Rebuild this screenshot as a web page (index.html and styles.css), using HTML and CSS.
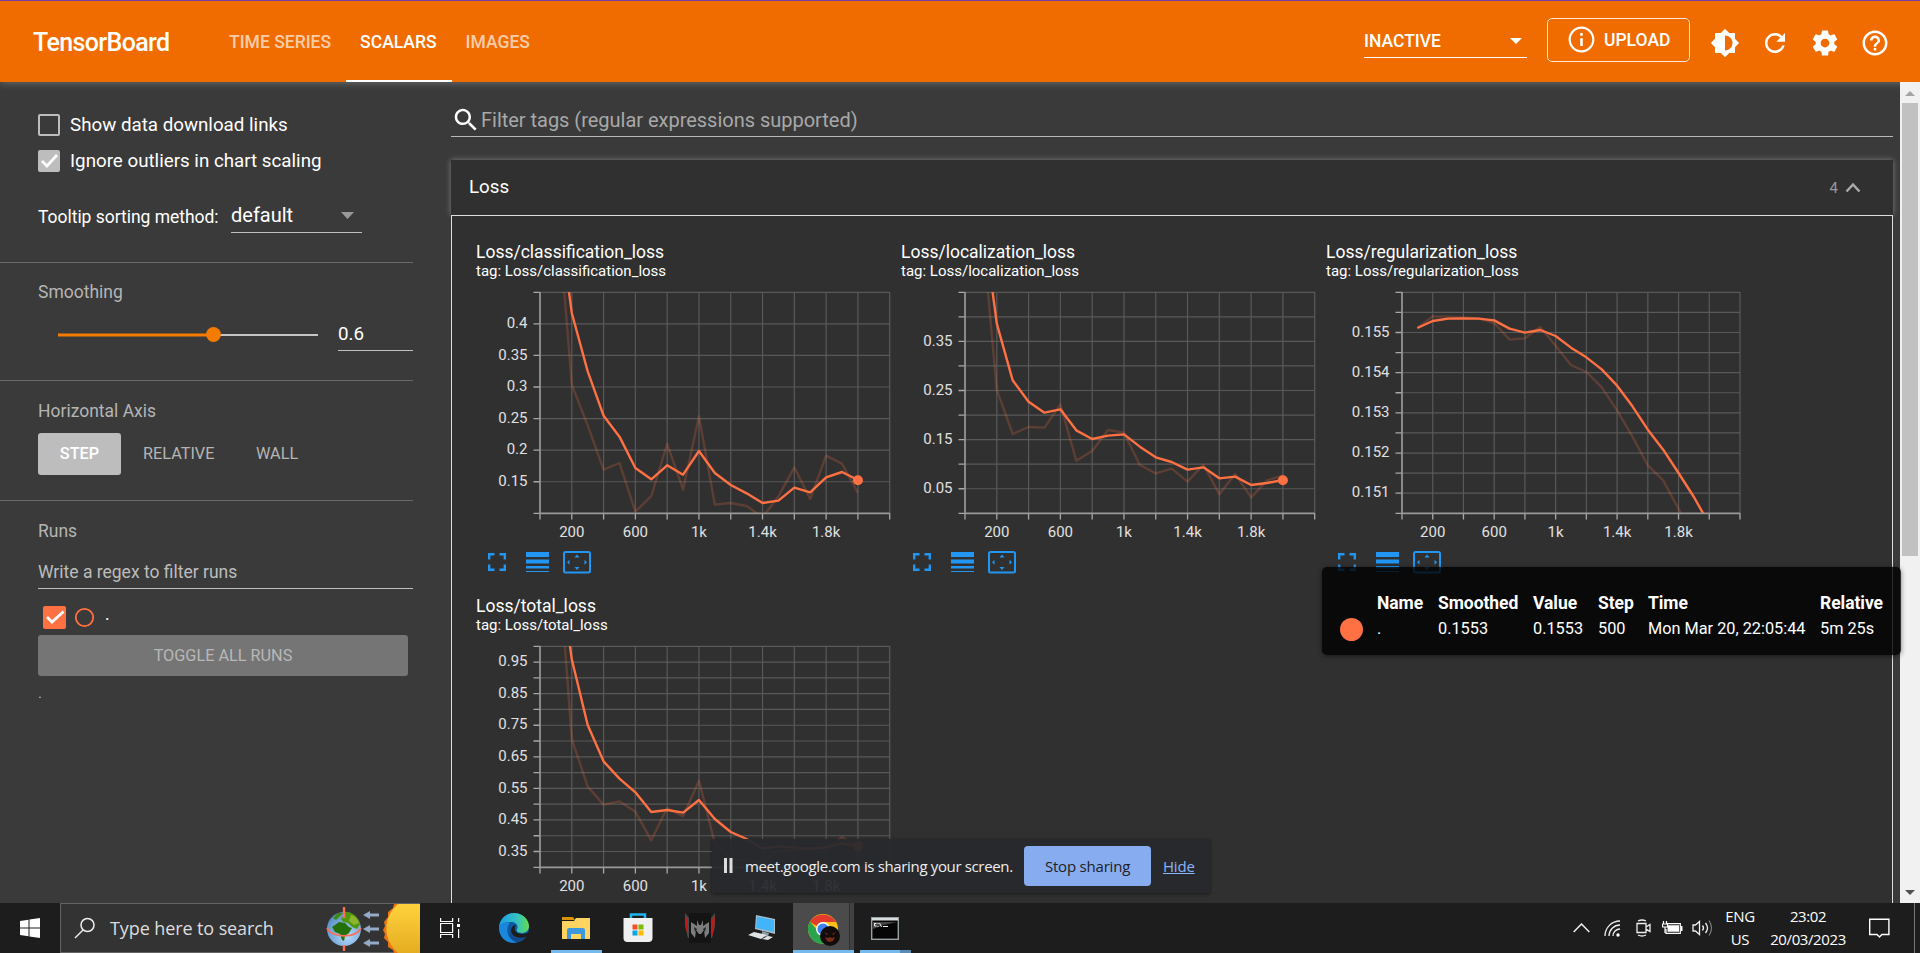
FILE: index.html
```html
<!DOCTYPE html>
<html lang="en">
<head>
<meta charset="utf-8">
<title>TensorBoard</title>
<link rel="stylesheet" href="styles.css">
</head>
<body>
<header class="topbar">
  <div class="brand">TensorBoard</div>
  <nav class="tabs">
    <a class="tab">TIME SERIES</a>
    <a class="tab active">SCALARS</a>
    <a class="tab">IMAGES</a>
  </nav>
  <div class="inactive"><span>INACTIVE</span><svg width="12" height="6" viewBox="0 0 12 6"><path d="M0 0h12L6 6z" fill="#fff"/></svg></div>
  <div class="upload"><svg width="31" height="31" viewBox="0 0 24 24"><path fill="#fff" d="M11 7h2v2h-2zm0 4h2v6h-2zm1-9C6.480 2 2 6.480 2 12s4.480 10 10 10 10-4.480 10-10S17.520 2 12 2zm0 18.300c-4.580 0-8.300-3.720-8.300-8.300S7.420 3.700 12 3.700s8.300 3.720 8.300 8.300-3.720 8.300-8.300 8.300z"/></svg><span>UPLOAD</span></div>
  <div class="actions">
    <svg viewBox="0 0 24 24"><path fill="#fff" d="M20 15.310 23.310 12 20 8.690V4h-4.690L12 .690 8.690 4H4v4.690L.690 12 4 15.310V20h4.690L12 23.310 15.310 20H20v-4.690zM12 18V6c3.310 0 6 2.690 6 6s-2.690 6-6 6z"/></svg>
    <svg viewBox="0 0 24 24"><path fill="#fff" d="M17.650 6.350C16.200 4.900 14.210 4 12 4c-4.420 0-7.990 3.580-7.990 8s3.570 8 7.990 8c3.730 0 6.840-2.550 7.730-6h-2.080c-.820 2.330-3.040 4-5.650 4-3.310 0-6-2.690-6-6s2.690-6 6-6c1.660 0 3.140.690 4.220 1.780L13 11h7V4l-2.350 2.350z"/></svg>
    <svg viewBox="0 0 24 24"><path fill="#fff" d="M19.430 12.980c.040-.320.070-.640.070-.980s-.030-.660-.070-.980l2.110-1.650c.190-.150.240-.420.120-.640l-2-3.460c-.120-.220-.390-.300-.610-.220l-2.490 1c-.520-.400-1.080-.730-1.690-.980l-.380-2.650C14.460 2.180 14.250 2 14 2h-4c-.250 0-.460.180-.490.420l-.380 2.650c-.610.250-1.170.590-1.690.980l-2.490-1c-.230-.090-.490 0-.610.220l-2 3.460c-.130.220-.070.490.120.640l2.110 1.650c-.040.320-.070.650-.070.980s.030.660.070.980l-2.110 1.650c-.190.150-.240.420-.120.640l2 3.460c.120.220.390.300.610.220l2.490-1c.520.400 1.080.730 1.690.980l.380 2.650c.030.240.240.420.490.420h4c.250 0 .460-.180.490-.420l.380-2.650c.610-.250 1.170-.590 1.690-.980l2.490 1c.230.090.490 0 .610-.220l2-3.460c.120-.220.070-.490-.120-.640l-2.110-1.650zM12 15.500c-1.930 0-3.500-1.570-3.500-3.500s1.570-3.500 3.500-3.500 3.500 1.570 3.500 3.500-1.570 3.500-3.500 3.500z"/></svg>
    <svg viewBox="0 0 24 24"><path fill="#fff" d="M11 18h2v-2h-2v2zm1-16C6.480 2 2 6.480 2 12s4.480 10 10 10 10-4.480 10-10S17.520 2 12 2zm0 18c-4.410 0-8-3.590-8-8s3.590-8 8-8 8 3.590 8 8-3.590 8-8 8zm0-14c-2.210 0-4 1.790-4 4h2c0-1.100.900-2 2-2s2 .900 2 2c0 2-3 1.750-3 5h2c0-2.250 3-2.500 3-5 0-2.210-1.790-4-4-4z"/></svg>
  </div>
</header>

<div class="workspace">
  <aside class="sidebar">
    <section class="options">
      <label class="check-row"><span class="box"></span><span class="t-show">Show data download links</span></label>
      <label class="check-row"><span class="box on"><svg width="22" height="22" viewBox="0 0 22 22"><path d="M4 11l5 5L19 5" fill="none" stroke="#fff" stroke-width="2.800"/></svg></span><span class="t-ignore">Ignore outliers in chart scaling</span></label>
      <div class="sorting"><span class="t-sort">Tooltip sorting method:</span><div class="select"><span>default</span><svg width="13" height="7" viewBox="0 0 13 7"><path d="M0 0h13L6.500 7z" fill="#999"/></svg></div></div>
    </section>
    <section class="smoothing">
      <h3>Smoothing</h3>
      <div class="slider-row">
        <svg class="slider" width="280" height="20" viewBox="0 0 280 20"><path d="M20 10H280" stroke="#c4c4c4" stroke-width="2"/><path d="M20 10H175" stroke="#f57c00" stroke-width="3"/><circle cx="175.500" cy="9.500" r="7.400" fill="#f57c00"/></svg>
        <div class="value">0.6</div>
      </div>
    </section>
    <section class="axis">
      <h3>Horizontal Axis</h3>
      <div class="modes"><button class="mode on">STEP</button><button class="mode rel">RELATIVE</button><button class="mode wall">WALL</button></div>
    </section>
    <section class="runs">
      <h3>Runs</h3>
      <div class="regex">Write a regex to filter runs</div>
      <div class="run"><svg width="44" height="24" viewBox="0 0 44 24"><rect width="23" height="23" rx="2" fill="#ff7043"/><path d="M4 11l5 5L20.500 5.500" fill="none" stroke="#fff" stroke-width="2.800"/><circle cx="41.500" cy="11.500" r="8.700" fill="none" stroke="#ff7043" stroke-width="1.800"/></svg><span>.</span></div>
      <button class="toggle">TOGGLE ALL RUNS</button>
      <div class="logdir">.</div>
    </section>
  </aside>

  <main class="main">
    <div class="filter"><svg width="30" height="30" viewBox="0 0 24 24"><path fill="#fff" d="M15.500 14h-.790l-.280-.270C15.410 12.590 16 11.110 16 9.500 16 5.910 13.090 3 9.500 3S3 5.910 3 9.500 5.910 16 9.500 16c1.610 0 3.090-.590 4.230-1.570l.270.280v.790l5 4.990L20.490 19l-4.990-5zm-6 0C7.010 14 5 11.990 5 9.500S7.010 5 9.500 5 14 7.010 14 9.500 11.990 14 9.500 14z"/></svg><span>Filter tags (regular expressions supported)</span></div>
    <div class="panel">
      <div class="panel-head"><span class="panel-title">Loss</span><span class="count">4</span><svg width="16" height="11" viewBox="0 0 16 11"><path d="M1.500 9.500 8 2.500l6.500 7" fill="none" stroke="#aaa" stroke-width="2.500"/></svg></div>
      <div class="cards" id="cards"></div>
    </div>
  </main>
  <div class="scrollbar"><i class="up"></i><i class="thumb"></i><i class="down"></i></div>
</div>

<div class="tooltip">
  <table>
    <tr><th class="c0"></th><th class="c1">Name</th><th class="c2">Smoothed</th><th class="c3">Value</th><th class="c4">Step</th><th class="c5">Time</th><th>Relative</th></tr>
    <tr><td><i class="swatch"></i></td><td>.</td><td>0.1553</td><td>0.1553</td><td>500</td><td>Mon Mar 20, 22:05:44</td><td>5m 25s</td></tr>
  </table>
</div>

<div class="sharebar">
  <svg width="9" height="15" viewBox="0 0 9 15"><path d="M0 0h3v15H0zM5.500 0h3v15h-3z" fill="#ddd"/></svg>
  <span class="share-text">meet.google.com is sharing your screen.</span>
  <button class="stop">Stop sharing</button>
  <a class="hide">Hide</a>
</div>

<footer class="taskbar">
  <div class="start"><svg width="20" height="20" viewBox="0 0 20 20"><path fill="#fff" d="M0 3l8.500-1.200v7.700H0zM9.500 1.600 20 0v9.500H9.500zM0 10.500h8.500v7.700L0 17zM9.500 10.500H20V20L9.500 18.500z"/></svg></div>
  <div class="search">
    <svg width="22" height="22" viewBox="0 0 22 22"><g fill="none" stroke="#eee" stroke-width="1.500"><circle cx="13.500" cy="8" r="6.500"/><path d="M9 13 1 21"/></g></svg>
    <span>Type here to search</span>
    <svg class="art" width="95" height="49" viewBox="0 0 95 49">
      <defs>
        <radialGradient id="sea" cx=".6" cy=".7" r=".7"><stop offset="0" stop-color="#b5dcff"/><stop offset="1" stop-color="#5a8fc4"/></radialGradient>
        <linearGradient id="sun" x1="0" y1="0" x2="0" y2="1"><stop offset="0" stop-color="#ffd23c"/><stop offset="1" stop-color="#e5ad22"/></linearGradient>
      </defs>
      <circle cx="19" cy="25" r="17" fill="url(#sea)"/>
      <path d="M18 8c8-1 15 4 17 12l-3 5-5-2-4-4-5-1-2-3 3-4z" fill="#4f970f"/>
      <path d="M7 23l7-5 6 1 4 4 3 1-3 5-4 3-1 5-2-1-2-6-5-2z" fill="#26700c"/>
      <path d="M8 14l5-5 5 0-4 4-3 3z" fill="#398b0e"/>
      <path d="M26 11c4 1 7 4 8 8l-5 2-5-4z" fill="#8cb52d"/>
      <path d="M2 24c5 10 28 11 34 0" fill="none" stroke="#f4715c" stroke-width="1.800"/>
      <path d="M19 3v11M19 41v6" stroke="#ff6f50" stroke-width="2.400"/>
      <path d="M38 11l7-4v2.500h9v3h-9V15zM38 25l7-4v2.500h9v3h-9V29zM38 39l7-4v2.500h9v3h-9V43z" fill="#94aac8"/>
      <path d="M95 0H69l-1 4-5 4v5l-4 5 1 4-2 4 2 4-1 4 4 4v5l5 3 1 3h26z" fill="#ed7413"/>
      <path d="M95 0H73C57 14 58 36 73 49h22z" fill="url(#sun)"/>
    </svg>
  </div>
  <div class="task view"><svg width="21" height="20" viewBox="0 0 21 20"><g fill="none" stroke="#fff" stroke-width="1.200"><path d="M.600 0v3.500h12V0M.600 5.500h12v9H.600zM.600 20v-3.500h12V20M18.600 0v4M18.600 11v9"/></g><path d="M17 6h3v3h-3z" fill="#fff"/></svg></div>
  <div class="task"><svg width="30" height="30" viewBox="0 0 30 30"><defs><linearGradient id="eg" x1="0" x2="1"><stop offset="0" stop-color="#1b9de2"/><stop offset=".6" stop-color="#35c1c4"/><stop offset="1" stop-color="#63dc4a"/></linearGradient></defs><circle cx="15" cy="15" r="15" fill="#0c59a4"/><path d="M0 14C1 5 8 0 15 0c9 0 15 7 15 13 0 5-4 7-7 7-5 0-6-2-5-4 2-4-2-7-6-7-6 0-10 2-12 5z" fill="url(#eg)"/><path d="M0 14c2-4 7-6 11-4-4 3-5 17 8 19C8 32 0 25 0 14z" fill="#1b87dc"/><path d="M17 12c-3 3-1 9 6 9 3 0 5-1 7-2l-1 4c-8 4-17 1-17-5 0-3 2-6 5-6z" fill="#1d1d1d"/><path d="M12 17c0 6 8 10 15 7-3 4-7 5-9 5-6-1-9-7-6-12z" fill="#124a8b"/></svg></div>
  <div class="task open"><svg width="28" height="24" viewBox="0 0 28 24"><path d="M0 1h11l2 3H0z" fill="#d99306"/><path d="M0 5h12l2-3h14v21H0z" fill="#ffd461"/><path d="M5 23v-9q0-2 2-2h14q2 0 2 2v9h-4v-5H9v5z" fill="#3d98de"/></svg></div>
  <div class="task"><svg width="30" height="30" viewBox="0 0 30 30"><path d="M8 7V1.500h14V7" fill="none" stroke="#21b4f2" stroke-width="2.500"/><path d="M.500 5h29v20q0 4-4 4h-21q-4 0-4-4z" fill="#f0f0f0"/><path d="M9.500 11.500h5v5h-5z" fill="#f25022"/><path d="M15.500 11.500h5v5h-5z" fill="#7fba00"/><path d="M9.500 17.500h5v5h-5z" fill="#00a4ef"/><path d="M15.500 17.500h5v5h-5z" fill="#ffb900"/></svg></div>
  <div class="task"><svg width="30" height="30" viewBox="0 0 30 30"><path d="M4 0h22v30H4z" fill="#141414"/><path d="M0 0l4 5v20h-1L0 13zM30 0l-4 5v20h1l3-12z" fill="#4b4b4b"/><path d="M0 3l3 4v17l-2-8zM30 3l-3 4v17l2-8z" fill="#c01818"/><path d="M12 7l2 5h2l2-5v6l6-4v11l-4 5-1-8-3 4h-2l-3-4-1 8-4-5V9l6 4z" fill="#7d7d7d"/><path d="M9 14l3 2-2 3zM21 14l-3 2 2 3z" fill="#222"/></svg></div>
  <div class="task"><svg width="28" height="26" viewBox="0 0 28 26"><path d="M8 0l19 4v15L7 14z" fill="#aebdca"/><path d="M9 1.500 26 5v12L8 13z" fill="#42b4fb"/><path d="M14 16l7 2-1 4-6-1z" fill="#8d98a0"/><path d="M0 20l6-3 13 3-6 4zM14 24l6-3 5 1-5 3z" fill="#dfe3e6"/></svg></div>
  <div class="task focused"><svg width="32" height="32" viewBox="0 0 32 32"><circle cx="15" cy="15" r="15" fill="#fbc116"/><path d="M2 8A15 15 0 0 1 28 8H15a7 7 0 0 0-6 4z" fill="#e33b2e"/><path d="M2 7.500A15 15 0 0 0 15 30l5-9q-8 1-11-5z" fill="#2ba24c"/><circle cx="15" cy="15" r="7" fill="#fff"/><circle cx="15" cy="15" r="5.600" fill="#3c82f1"/><circle cx="22" cy="22" r="10" fill="#120d0c"/><path d="M16 18l4 2-1 1zM28 18l-4 2 1 1zM17 23l3 1 2-1 2 1 3-1-2 4-3 1-3-1z" fill="#7b2d16"/></svg></div>
  <div class="task term"><svg width="28" height="23" viewBox="0 0 28 23"><rect x=".7" y=".7" width="26.600" height="21.600" fill="#060606" stroke="#99a1a5" stroke-width="1.400"/><path d="M1 1h26v2.500H1z" fill="#d7dcde"/><path d="M2 12Q14 7 26 5H2z" fill="#444"/><path d="M3.500 6.500h2M3.500 6v3M3.500 9h2M7 6v1M7 9v1M8.500 6l2 4M12 9.500h5" stroke="#eee" fill="none"/></svg></div>
  <div class="tray">
    <svg width="17" height="10" viewBox="0 0 17 10"><path d="M.700 9 8.500 1l7.800 8" fill="none" stroke="#eee" stroke-width="1.500"/></svg>
    <svg class="wifi" width="17" height="17" viewBox="0 0 17 17"><g fill="none" stroke="#eee" stroke-width="1.300"><path d="M1 16A15 15 0 0 1 16 1M5 16A11 11 0 0 1 16 5M9 16a7 7 0 0 1 7-7" /></g><circle cx="14" cy="15" r="1.700" fill="#fff"/></svg>
    <svg class="cam" width="15" height="18" viewBox="0 0 15 18"><g fill="none" stroke="#eee" stroke-width="1.300"><path d="M1 4.500h9v9H1zM10 8l4-2.500v7L10 10M2 2q4-2 8 0M2 16q4 2 8 0"/></g></svg>
    <svg class="bat" width="21" height="14" viewBox="0 0 21 14"><path d="M5 2.700h13.300v9.600H4V8" fill="none" stroke="#fff" stroke-width="1.200"/><path d="M5.500 4.300H17v6.500H5.500zM19 5h1.500v5H19z" fill="#fff"/><path d="M1.500 0v3M4.500 0v3M.500 3h5v3h-5zM3 6v6" fill="none" stroke="#fff" stroke-width="1.200"/></svg>
    <svg class="snd" width="22" height="18" viewBox="0 0 22 18"><g fill="none" stroke="#eee" stroke-width="1.300"><path d="M1 6h2.500L7.500 2.500v13L3.500 12H1zM10.500 6.500q2 2.500 0 5M13.500 4q4 5 0 10"/><path d="M17 1.500q5 7.500 0 15" stroke="#777"/></g></svg>
    <div class="lang"><div>ENG</div><div>US</div></div>
    <div class="clock"><div>23:02</div><div>20/03/2023</div></div>
    <svg class="note" width="21" height="21" viewBox="0 0 21 21"><path d="M.700 1.200h19.200v15.300h-7L10.500 19 8 16.500H.700z" fill="none" stroke="#fff" stroke-width="1.400"/></svg>
    <i class="desk"></i>
  </div>
</footer>
<script src="charts.js"></script>
</body>
</html>
```
FILE: styles.css
```css
* { box-sizing: border-box; }
body { margin: 0; width: 1920px; height: 953px; overflow: hidden; background: #3a3a3a; color: #fff; font-family: Roboto, "Liberation Sans", sans-serif; display: flex; flex-direction: column; }
button { font-family: inherit; border: 0; padding: 0; }
svg { display: block; flex: none; }
span, h3, a, .tab { white-space: nowrap; }

.topbar { height: 82px; flex: none; background: #f06c00; border-top: 1px solid #7440a8; display: flex; align-items: center; padding-left: 33px; position: relative; z-index: 1; box-shadow: 0 1px 8px rgba(255,255,255,.26); }
.brand { width: 182px; font-size: 25px; font-weight: 500; letter-spacing: -.625px; padding-top: 2px; }
.tabs { display: flex; height: 81px; }
.tab { padding: 2px 15px 0 14px; font-size: 17.5px; font-weight: 500; line-height: 78px; height: 81px; border-bottom: 2px solid transparent; color: rgba(255,255,255,.68); }
.tab.active { color: #fff; border-color: #fff; }
.inactive { margin-left: auto; width: 163px; height: 34px; margin-bottom: 1px; border-bottom: 1px solid #fff; display: flex; justify-content: space-between; align-items: center; padding: 1px 5px 0 0; font-size: 17.5px; font-weight: 500; }
.upload { margin: 0 20px 4px; width: 143px; height: 44px; border: 1px solid rgba(255,255,255,.85); border-radius: 5px; display: flex; align-items: center; padding-left: 18px; gap: 7px; font-size: 17.5px; font-weight: 500; }
.actions { display: flex; gap: 20px; width: 210px; padding-top: 3px; }
.actions svg { width: 30px; height: 30px; }

.workspace { flex: none; height: 821px; display: flex; overflow: hidden; }
.sidebar { width: 413px; flex: none; color: #fff; }
.sidebar section { padding-left: 38px; border-bottom: 1px solid #686868; }
.sidebar section.runs { border: 0; }
.sidebar h3 { margin: 0; font-size: 17.5px; font-weight: 400; line-height: 24px; color: #b5b5b5; }
.options { height: 181px; padding-top: 25px; font-size: 18.750px; }
.check-row { display: flex; align-items: center; height: 36px; gap: 10px; }
.box { width: 22px; height: 22px; border: 2px solid #bdbdbd; border-radius: 2px; }
.box.on { border: 0; background: #bdbdbd; }
.sorting { display: flex; margin-top: 26px; height: 28px; }
.t-sort { width: 193px; font-size: 17.5px; line-height: 24px; letter-spacing: -.03px; }
.select { width: 131px; height: 29px; margin-top: -1px; border-bottom: 1px solid #c0c0c0; display: flex; align-items: center; justify-content: space-between; font-size: 20px; padding: 0 8px 6px 0; }
.smoothing { height: 118px; padding-top: 17px; }
.slider-row { display: flex; margin-top: 17px; }
.slider { margin-top: 4px; }
.value { margin-left: 20px; width: 75px; height: 30px; line-height: 26px; border-bottom: 1px solid #c0c0c0; font-size: 18.750px; }
.axis { height: 120px; padding-top: 18px; }
.modes { display: flex; margin-top: 10px; }
.mode { height: 42px; border-radius: 3px; background: none; color: #b5b5b5; font-size: 16.250px; text-align: left; width: 113px; padding: 0 0 2px 22px; }
.mode.on { width: 83px; padding: 0 0 2px; text-align: center; background: #bdbdbd; color: #fff; font-weight: 500; }
.runs { padding-top: 18px; }
.regex { width: 375px; height: 46px; border-bottom: 1px solid #c0c0c0; padding-top: 10px; line-height: 38px; font-size: 17.5px; color: #bdbdbd; }
.run { margin: 17px 0 0 5px; height: 29px; display: flex; gap: 18px; }
.run svg { overflow: visible; }
.run span { font-size: 17.5px; line-height: 17px; }
.toggle { display: block; width: 370px; height: 41px; background: #757575; border-radius: 3px; color: #b8b8b8; font-size: 16.250px; }
.logdir { color: #b5b5b5; font-size: 15px; line-height: 17px; margin-top: 9px; }

.main { width: 1442px; margin-left: 38px; padding-top: 22px; }
.filter { height: 33px; border-bottom: 1px solid #b8b8b8; display: flex; align-items: center; font-size: 20px; letter-spacing: -.02px; color: #a8a8a8; }
.panel { margin-top: 23px; }
.panel-head { height: 55px; background: #303030; box-shadow: 0 0 6px rgba(255,255,255,.35); display: flex; align-items: center; padding: 0 32px 0 18px; }
.panel-title { font-size: 18.750px; margin-right: auto; padding-bottom: 2px; }
.count { font-size: 15px; color: #999; margin-right: 7px; }
.cards { height: 740px; background: #303030; border: 1px solid #ddd; display: grid; grid-template-columns: repeat(3, 425px); grid-auto-rows: 354px; padding: 26px 0 0 24px; position: relative; }
.card-title { font-size: 17.5px; line-height: 21px; white-space: nowrap; }
.card-tag { font-size: 15px; line-height: 17px; white-space: nowrap; }
.plot { margin-top: 5px; font-size: 15px; }
.plot text { fill: #e0e0e0; }
.tools { display: flex; align-items: center; padding-left: 12px; height: 24px; margin-top: 7px; }
.tools .bars { margin: 0 14px 0 20px; }

.scrollbar { width: 20px; margin-left: 7px; background: #f1f1f1; display: flex; flex-direction: column; align-items: center; }
.scrollbar .up { margin-top: 9px; border: 5px solid transparent; border-top: 0; border-bottom-color: #a3a3a3; }
.scrollbar .thumb { margin-top: 7px; width: 16px; height: 453px; background: #c1c1c1; }
.scrollbar .down { margin: auto 0 8px; border: 5px solid transparent; border-bottom: 0; border-top-color: #505050; }

.tooltip { position: absolute; z-index: 3; left: 1322px; top: 567px; width: 579px; height: 88px; border-radius: 5px; background: rgba(0,0,0,.8); box-shadow: 0 1px 5px rgba(0,0,0,.5); padding: 23px 0 0 18px; }
.tooltip table { border-collapse: collapse; table-layout: fixed; width: 561px; }
.tooltip th, .tooltip td { padding: 0; text-align: left; height: 26px; line-height: 26px; white-space: nowrap; }
.tooltip th { font-weight: 700; font-size: 17.5px; letter-spacing: -.05px; }
.tooltip td { font-size: 16.300px; }
.c0 { width: 37px; } .c1 { width: 61px; } .c2 { width: 95px; } .c3 { width: 65px; } .c4 { width: 50px; } .c5 { width: 172px; }
.swatch { display: block; width: 23px; height: 23px; border-radius: 50%; background: #ff7043; }

.sharebar { position: absolute; z-index: 4; left: 712px; top: 839px; width: 498px; height: 54px; background: rgba(40,41,45,.95); box-shadow: 0 1px 3px rgba(0,0,0,.5); display: flex; align-items: center; padding: 0 0 1px 12px; font-family: "Open Sans", "Noto Sans", sans-serif; font-size: 15px; }
.share-text { margin-left: 12px; width: 279px; color: #eee; letter-spacing: -.35px; }
.stop { width: 127px; height: 40px; border-radius: 4px; background: #87adf0; color: #202124; font-size: 15px; letter-spacing: -.2px; }
.hide { margin-left: 12px; color: #8ab4f8; text-decoration: underline; letter-spacing: -.2px; }

.taskbar { height: 50px; flex: none; background: #1d1d1d; display: flex; align-items: center; position: relative; z-index: 2; font-family: "Open Sans", "Noto Sans", sans-serif; }
.start { width: 60px; padding-left: 20px; }
.search { width: 360px; height: 50px; background: #333; border: 1px solid #646464; display: flex; align-items: center; padding-left: 13px; font-size: 18px; color: #ddd; }
.search span { margin-left: 14px; letter-spacing: -.1px; }
.search .art { margin: 0 -1px 0 auto; }
.task { width: 62px; height: 50px; display: flex; align-items: center; justify-content: center; }
.task.view { width: 63px; padding-right: 3px; }
.task.open { background: linear-gradient(#76b9ed, #76b9ed) 6px 47px / 51px 3px no-repeat; }
.task.focused { width: 61px; background: linear-gradient(#76b9ed, #76b9ed) 0 47px / 61px 3px no-repeat, linear-gradient(90deg, #4b4b4b 56px, #303030 56px, #303030 57px, #414141 57px); padding: 3px 0 0 0; }
.task.term { background: linear-gradient(90deg, #76b9ed 40px, #5b8ab2 40px) 6px 47px / 51px 3px no-repeat; }
.tray { margin-left: auto; display: flex; align-items: center; height: 50px; font-size: 15px; color: #fff; width: 347px; }
.wifi { margin-left: 14px; }
.cam { margin-left: 15px; }
.bat { margin-left: 11px; }
.snd { margin-left: 9px; }
.lang { margin-left: 6px; width: 40px; text-align: center; line-height: 23px; padding-bottom: 1px; letter-spacing: -.3px; }
.clock { margin-left: 2px; width: 92px; text-align: center; line-height: 23px; padding-bottom: 1px; white-space: nowrap; letter-spacing: -.4px; }
.note { margin-left: 15px; }
.desk { margin-left: 24px; width: 1px; height: 50px; background: #777; }
```
FILE: charts.js
```js
// Each series holds the vertical offsets, in thirds of a pixel, for steps 100 to 2000.
const charts = [
  { name: "Loss/classification_loss", x0: 64, w: 349.7, rows: 7, labels: { 1: "0.4", 2: "0.35", 3: "0.3", 4: "0.25", 5: "0.2", 6: "0.15" }, dot: true,
    smooth: [-291,63,238,371,434,528,562,520,548,477,543,579,604,633,626,587,601,556,540,564],
    raw: [-313,278,400,533,513,659,612,456,593,373,638,633,642,676,613,526,621,491,515,603] },
  { name: "Loss/localization_loss", x0: 64, w: 349.7, rows: 9, labels: { 2: "0.35", 4: "0.25", 6: "0.15", 8: "0.05" }, dot: true,
    smooth: [-267,95,265,329,362,352,415,441,431,427,464,496,510,533,526,559,554,579,573,564],
    raw: [-234,293,426,405,407,337,506,477,414,422,519,544,530,569,518,607,546,616,565,550] },
  { name: "Loss/regularization_loss", x0: 76, w: 338, rows: 11, labels: { 2: "0.155", 4: "0.154", 6: "0.153", 8: "0.152", 10: "0.151" }, dot: false,
    smooth: [108,87,80,79,80,85,110,122,114,132,167,196,232,281,343,413,473,543,615,697],
    raw: [108,73,74,76,79,93,143,139,105,161,219,240,286,355,434,520,565,651,733,815] },
  { name: "Loss/total_loss", x0: 64, w: 349.7, rows: 14, labels: { 1: "0.95", 3: "0.85", 5: "0.75", 7: "0.65", 9: "0.55", 11: "0.45", 13: "0.35" }, dot: true,
    smooth: [-306,40,237,346,398,439,498,492,500,462,519,558,579,608,601,605,608,604,592,599],
    raw: [-368,279,422,476,466,497,583,486,511,404,592,642,642,650,615,612,610,607,574,602] }
];
const TOP = 7, H = 221;

function plot(c, i) {
  const dx = c.w / 11, dy = H / c.rows, right = c.x0 + c.w, bottom = TOP + H;
  let grid = "", ticks = "", text = "";
  for (let k = 0; k <= 11; k++) {
    const x = c.x0 + k * dx;
    if (k) grid += `M${x} ${TOP}V${bottom}`;
    ticks += `M${x} ${bottom}v6.500`;
  }
  for (let k = 0; k <= c.rows; k++) {
    const y = TOP + k * dy;
    if (k < c.rows) grid += `M${c.x0} ${y + .3}H${right}`;
    ticks += `M${c.x0} ${y + .3}h-6.500`;
    if (c.labels[k]) text += `<text x="${c.x0 - 12.5}" y="${y + 4.5}" text-anchor="end">${c.labels[k]}</text>`;
  }
  [[1, "200"], [3, "600"], [5, "1k"], [7, "1.4k"], [9, "1.8k"]].forEach(([k, s]) => {
    text += `<text x="${c.x0 + k * dx}" y="${TOP + 244.5}" text-anchor="middle">${s}</text>`;
  });
  const points = s => s.map((v, k) => `${c.x0 + (k + 1) * dx / 2},${TOP + v / 3}`).join(" ");
  const dot = c.dot ? `<circle cx="${c.x0 + 10 * dx}" cy="${TOP + .3 + c.smooth[19] / 3}" r="5" fill="#ff7043"/>` : "";
  return `<svg class="plot" width="424" height="258" viewBox="0 0 424 258">
    <clipPath id="clip${i}"><rect x="${c.x0}" y="${TOP}" width="${c.w}" height="${H}"/></clipPath>
    <path d="${grid}" stroke="#fff" stroke-opacity=".2" stroke-width="1.200" fill="none"/>
    <path d="${ticks}" stroke="#a8a8a8" stroke-width="1.300" fill="none"/>
    <path d="M${c.x0} ${TOP}V${bottom + .3}H${right}" stroke="#999" stroke-width="1.700" fill="none"/>
    <g clip-path="url(#clip${i})" fill="none" stroke="#ff7043" stroke-width="2.400" stroke-linejoin="round">
      <polyline points="${points(c.raw)}" stroke-opacity=".22"/><polyline points="${points(c.smooth)}"/></g>
    ${dot}${text}</svg>`;
}

const tools = `<div class="tools">
  <svg width="18" height="18" viewBox="0 0 18 18"><path d="M1.200 6.500V1.200h5.300M11.500 1.200h5.300v5.300M16.800 11.500v5.300h-5.300M6.500 16.800H1.200v-5.300" fill="none" stroke="#2196f3" stroke-width="2.400"/></svg>
  <svg class="bars" width="23" height="20" viewBox="0 0 23 20"><path d="M0 0h23v5H0zM0 7.500h23v4H0zM0 14h23v2.500H0zM0 19h23v1H0z" fill="#2196f3"/></svg>
  <svg width="28" height="23" viewBox="0 0 28 23"><rect x="1" y="1" width="26" height="20.500" rx="1.500" fill="none" stroke="#2196f3" stroke-width="2"/><path d="M14 3.500l2.500 3h-5zM14 19l2.500-3h-5zM4 11.200l2.500-2.500v5zM24 11.200l-2.500-2.500v5z" fill="#2196f3"/></svg></div>`;

document.getElementById("cards").innerHTML = charts.map((c, i) =>
  `<div class="card"><div class="card-title">${c.name}</div><div class="card-tag">tag: ${c.name}</div>${plot(c, i)}${tools}</div>`).join("");
```
